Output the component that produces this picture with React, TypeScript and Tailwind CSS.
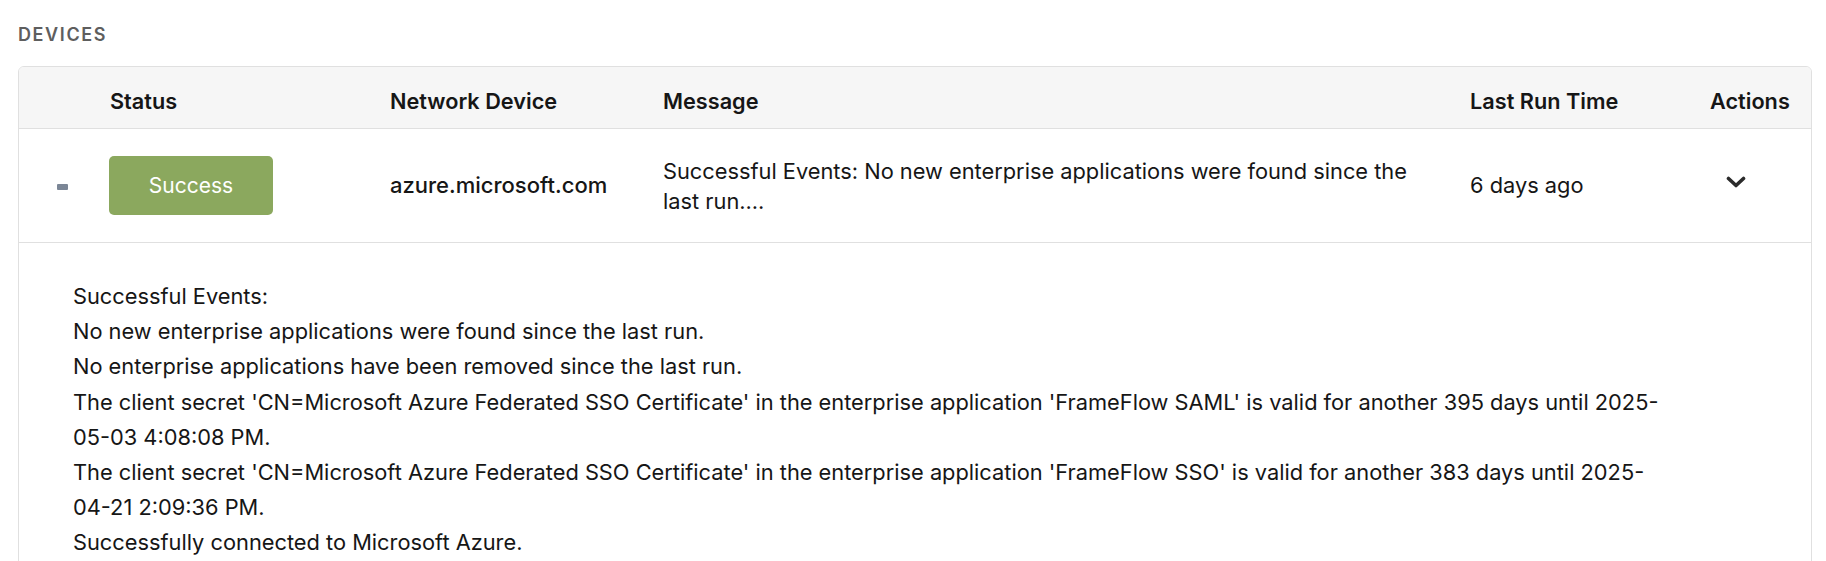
import React from "react";

const detailLines = [
  "Successful Events:",
  "No new enterprise applications were found since the last run.",
  "No enterprise applications have been removed since the last run.",
  "The client secret 'CN=Microsoft Azure Federated SSO Certificate' in the enterprise application 'FrameFlow SAML' is valid for another 395 days until 2025-05-03 4:08:08 PM.",
  "The client secret 'CN=Microsoft Azure Federated SSO Certificate' in the enterprise application 'FrameFlow SSO' is valid for another 383 days until 2025-04-21 2:09:36 PM.",
  "Successfully connected to Microsoft Azure.",
];

const cols = "grid grid-cols-[91px_280px_273px_807px_240px_1fr]";

function ChevronDown() {
  return (
    <svg width="20" height="12" viewBox="0 0 20 12" fill="none">
      <path d="M2.5 2.5 L10 9.5 L17.5 2.5" stroke="#2b2b2b" strokeWidth="3.6" strokeLinecap="round" strokeLinejoin="round" />
    </svg>
  );
}

export default function App() {
  return (
    <div className="min-h-screen bg-white pl-[18px] pr-[14px] font-['Inter',sans-serif] text-[#161616]">
      <h2 className="pt-[23px] text-[18px] leading-[24px] font-semibold tracking-[1.6px] text-[#5e5e5e]">DEVICES</h2>

      <div className="mt-[19px] rounded-[6px] border border-[#e0e0e0] overflow-hidden">
        {/* header */}
        <div className={`${cols} h-[62px] items-center bg-[#f6f6f6] border-b border-[#e0e0e0] pt-[7px] text-[21.7px] font-semibold`}>
          <div />
          <div>Status</div>
          <div>Network Device</div>
          <div>Message</div>
          <div>Last Run Time</div>
          <div>Actions</div>
        </div>

        {/* row */}
        <div className={`${cols} h-[114px] items-center border-b border-[#e0e0e0]`}>
          <div className="pl-[38px] pt-[2px]">
            <div className="h-[6px] w-[11px] rounded-[1px] bg-[#7b8696]" />
          </div>
          <div>
            <div className="flex h-[59px] w-[164px] -ml-[1px] items-center justify-center rounded-[5px] bg-[#8ba85e] text-[21px] text-white">
              Success
            </div>
          </div>
          <div className="text-[22px] font-medium">azure.microsoft.com</div>
          <div className="pr-[45px] text-[21.8px] leading-[30px]">
            Successful Events: No new enterprise applications were found since the last run....
          </div>
          <div className="text-[21.8px]">6 days ago</div>
          <div className="pl-[16px] pb-[7px]">
            <ChevronDown />
          </div>
        </div>

        {/* expanded details */}
        <div className="pl-[54px] pt-[36px] pb-[30px] text-[21.8px] leading-[35.2px]">
          <div className="max-w-[1605px]">
            {detailLines.map((l) => (
              <div key={l}>{l}</div>
            ))}
          </div>
        </div>
      </div>
    </div>
  );
}
